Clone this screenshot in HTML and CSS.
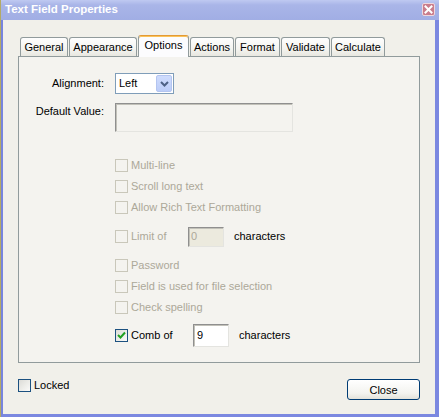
FILE: index.html
```html
<!DOCTYPE html>
<html>
<head>
<meta charset="utf-8">
<title>Text Field Properties</title>
<link rel="stylesheet" href="styles.css">
</head>
<body>
<div class="window">
  <div class="titlebar">
    <span class="title">Text Field Properties</span>
    <span class="close-x">
      <svg width="11" height="11" viewBox="0 0 11 11"><path d="M2.5 2.5 L8.5 8.5 M8.5 2.5 L2.5 8.5" stroke="#fff" stroke-width="2" stroke-linecap="square"/></svg>
    </span>
  </div>
  <div class="frame">
    <div class="tabs">
      <div class="tab tab-general">General</div>
      <div class="tab tab-appearance">Appearance</div>
      <div class="tab tab-options tab--active">Options</div>
      <div class="tab tab-actions">Actions</div>
      <div class="tab tab-format">Format</div>
      <div class="tab tab-validate">Validate</div>
      <div class="tab tab-calculate">Calculate</div>
    </div>
    <div class="panel">
      <div class="form-grid">
        <div class="field-label">Alignment:</div>
        <div class="select">
          <span>Left</span>
          <span class="select-btn">
            <svg width="9" height="6" viewBox="0 0 9 6"><path d="M1 1 L4.5 4.5 L8 1" fill="none" stroke="#4d6185" stroke-width="2"/></svg>
          </span>
        </div>
        <div class="field-label field-label--top">Default Value:</div>
        <div class="textbox textbox--wide"></div>
      </div>
      <div class="options">
        <div class="check-row is-disabled"><span class="cb"></span><span>Multi-line</span></div>
        <div class="check-row is-disabled"><span class="cb"></span><span>Scroll long text</span></div>
        <div class="check-row is-disabled"><span class="cb"></span><span>Allow Rich Text Formatting</span></div>
        <div class="check-row is-disabled row-gap"><span class="cb"></span><span class="inline-label inline-label--limit">Limit of</span><span class="textbox textbox--small textbox--disabled">0</span><span class="chars">characters</span></div>
        <div class="check-row is-disabled row-gap"><span class="cb"></span><span>Password</span></div>
        <div class="check-row is-disabled"><span class="cb"></span><span>Field is used for file selection</span></div>
        <div class="check-row is-disabled"><span class="cb"></span><span>Check spelling</span></div>
        <div class="check-row row-comb"><span class="cb cb--on"><svg width="11" height="11" viewBox="0 0 11 11"><path d="M2 5 L4.5 7.5 L9 2.5" fill="none" stroke="#21a121" stroke-width="2"/></svg></span><span class="inline-label inline-label--comb">Comb of</span><span class="textbox textbox--small textbox--comb">9</span><span class="chars">characters</span></div>
      </div>
    </div>
    <div class="footer">
      <div class="check-row check-row--footer"><span class="cb cb--on"></span><span>Locked</span></div>
      <button class="btn">Close</button>
    </div>
  </div>
</div>
</body>
</html>
```
FILE: styles.css
```css
* { box-sizing: border-box; }
html, body { margin: 0; padding: 0; }
body {
  font-family: "Liberation Sans", Arial, sans-serif;
  font-size: 11px;
  line-height: 13px;
  color: #000;
  background: #f1f0ea;
}
.window {
  width: 439px;
  height: 417px;
  display: flex;
  flex-direction: column;
  border-left: 1px solid #b3aa66;
}
.titlebar {
  height: 20px;
  flex: none;
  display: flex;
  align-items: center;
  justify-content: space-between;
  padding: 0 4px 1px 4px;
  background: linear-gradient(#bfc9f1, #a9b5e8 25%, #a1aee4);
}
.title {
  color: #fff;
  font-weight: bold;
  font-size: 11.5px;
}
.close-x {
  width: 13px;
  height: 13px;
  display: flex;
  align-items: center;
  justify-content: center;
  background: #c97d8c;
  border: 1px solid #eed7dd;
  border-radius: 2px;
}
.frame {
  flex: 1;
  display: flex;
  flex-direction: column;
  border-left: 2px solid #7885dd;
  border-right: 4px solid #7b88e0;
  border-bottom: 3px solid #7b88e0;
  background: #f1f0ea;
  padding: 15px 15px 0 15px;
}
.tabs {
  display: flex;
  align-items: flex-end;
  height: 21px;
  padding-left: 2px;
  position: relative;
  z-index: 1;
}
.tab {
  height: 19px;
  margin-right: 1px;
  border: 1px solid #919b9c;
  border-bottom: none;
  border-radius: 3px 3px 0 0;
  background: linear-gradient(#fefefe, #f4f4f0 60%, #e8e7e0);
  display: flex;
  align-items: center;
  justify-content: center;
}
.tab-general { width: 48px; }
.tab-appearance { width: 68px; }
.tab-options { width: 51px; }
.tab-actions { width: 44px; }
.tab-format { width: 45px; }
.tab-validate { width: 49px; }
.tab-calculate { width: 54px; }
.tab--active {
  height: 22px;
  margin-bottom: -1px;
  padding-bottom: 2px;
  background: #fcfcfe;
  border-top: 1px solid #e39a35;
  box-shadow: inset 0 1px #fbc35a;
}
.panel {
  height: 307px;
  border: 1px solid #919b9c;
  background: #f4f3ef;
  padding-top: 16px;
}
.form-grid {
  display: grid;
  grid-template-columns: 85px auto;
  grid-template-rows: 21px 29px;
  column-gap: 11px;
  row-gap: 9px;
  justify-items: start;
}
.field-label {
  justify-self: end;
  align-self: center;
  text-align: right;
}
.field-label--top {
  align-self: start;
  padding-top: 2px;
}
.select {
  width: 59px;
  height: 21px;
  display: flex;
  align-items: center;
  justify-content: space-between;
  border: 1px solid #7f9db9;
  background: #fff;
  padding: 1px 1px 1px 3px;
}
.select-btn {
  width: 16px;
  height: 17px;
  display: flex;
  align-items: center;
  justify-content: center;
  background: linear-gradient(#cfdcfd, #bccdf8);
  border: 1px solid #b4c5f0;
  border-radius: 2px;
}
.textbox {
  border: 1px solid;
  border-color: #8f8f8f #e4e4e0 #e4e4e0 #8f8f8f;
  box-shadow: inset 1px 1px #c2c1b9;
  background: #f4f3ef;
}
.textbox--wide {
  width: 178px;
  height: 29px;
}
.textbox--small {
  width: 36px;
  display: flex;
  align-items: center;
  padding-left: 2px;
}
.textbox--disabled {
  height: 20px;
  color: #aca899;
  background: #eceade;
}
.textbox--comb {
  height: 23px;
  background: #fff;
  padding-left: 3px;
}
.options {
  margin-left: 96px;
  margin-top: 23px;
}
.check-row {
  display: flex;
  align-items: center;
  height: 21px;
}
.check-row.is-disabled { color: #aca899; }
.row-gap { margin-top: 8px; }
.row-comb { margin-top: 6px; height: 23px; }
.cb {
  width: 13px;
  height: 13px;
  flex: none;
  margin-right: 3px;
  border: 1px solid #c9c7ba;
  display: flex;
  align-items: center;
  justify-content: center;
}
.cb--on {
  border-color: #1c5180;
  background: linear-gradient(135deg, #dcdcd7, #fbfbf9);
}
.inline-label--limit { width: 57px; }
.inline-label--comb { width: 62px; }
.chars {
  color: #000;
  margin-left: 10px;
}
.footer {
  display: flex;
  justify-content: space-between;
  align-items: flex-start;
  padding-top: 16px;
}
.check-row--footer { height: 13px; }
.btn {
  width: 73px;
  height: 21px;
  margin: 0;
  padding: 0;
  font-family: inherit;
  font-size: 11px;
  color: #000;
  border: 1px solid #003c74;
  border-radius: 3px;
  background: linear-gradient(#ffffff, #f3f3ef 70%, #e3e2da);
}
```
